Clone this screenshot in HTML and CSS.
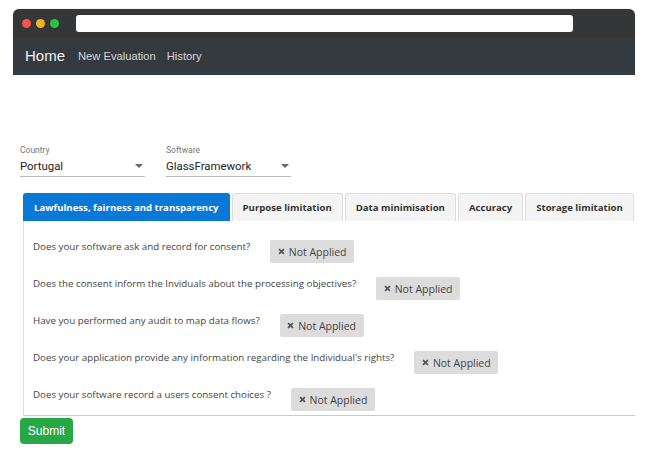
FILE: index.html
```html
<!DOCTYPE html>
<html>
<head>
<meta charset="utf-8">
<link rel="stylesheet" href="styles.css">
</head>
<body>
<div class="frame">
  <div class="titlebar">
    <span class="dot red"></span><span class="dot yellow"></span><span class="dot green"></span>
    <div class="url"></div>
  </div>
  <nav class="nav">
    <span class="brand">Home</span>
    <span class="link">New Evaluation</span>
    <span class="link">History</span>
  </nav>
</div>

<main class="main">
  <div class="selects">
    <div class="field">
      <div class="label">Country</div>
      <div class="select"><span>Portugal</span><span class="caret"></span></div>
    </div>
    <div class="field">
      <div class="label">Software</div>
      <div class="select"><span>GlassFramework</span><span class="caret"></span></div>
    </div>
  </div>

  <div class="tabs-wrap">
    <div class="tabs">
      <div class="tab active">Lawfulness, fairness and transparency</div>
      <div class="tab">Purpose limitation</div>
      <div class="tab">Data minimisation</div>
      <div class="tab">Accuracy</div>
      <div class="tab">Storage limitation</div>
      <div class="tab more"></div>
    </div>
    <div class="panel">
      <div class="q"><span class="qt">Does your software ask and record for consent?</span><button class="na"><svg viewBox="0 0 8 8" width="7" height="7"><path d="M1.2 1.2 6.8 6.8 M6.8 1.2 1.2 6.8" stroke="#555" stroke-width="2"/></svg>Not Applied</button></div>
      <div class="q"><span class="qt">Does the consent inform the Inviduals about the processing objectives?</span><button class="na"><svg viewBox="0 0 8 8" width="7" height="7"><path d="M1.2 1.2 6.8 6.8 M6.8 1.2 1.2 6.8" stroke="#555" stroke-width="2"/></svg>Not Applied</button></div>
      <div class="q"><span class="qt">Have you performed any audit to map data flows?</span><button class="na"><svg viewBox="0 0 8 8" width="7" height="7"><path d="M1.2 1.2 6.8 6.8 M6.8 1.2 1.2 6.8" stroke="#555" stroke-width="2"/></svg>Not Applied</button></div>
      <div class="q"><span class="qt">Does your application provide any information regarding the Individual's rights?</span><button class="na"><svg viewBox="0 0 8 8" width="7" height="7"><path d="M1.2 1.2 6.8 6.8 M6.8 1.2 1.2 6.8" stroke="#555" stroke-width="2"/></svg>Not Applied</button></div>
      <div class="q"><span class="qt">Does your software record a users consent choices ?</span><button class="na"><svg viewBox="0 0 8 8" width="7" height="7"><path d="M1.2 1.2 6.8 6.8 M6.8 1.2 1.2 6.8" stroke="#555" stroke-width="2"/></svg>Not Applied</button></div>
    </div>
  </div>
  <button class="submit">Submit</button>
</main>
</body>
</html>
```

FILE: styles.css
```css
* { box-sizing: border-box; }
body {
  margin: 0;
  background: #fff;
  font-family: "Open Sans", sans-serif;
  width: 667px;
  height: 455px;
  overflow: hidden;
}
.frame {
  margin: 9px 0 0 13px;
  width: 622px;
  border-radius: 6px 6px 0 0;
  overflow: hidden;
  box-shadow: 0 0 1px rgba(0,0,0,.4);
}
.titlebar {
  height: 29px;
  background: #353637;
  display: flex;
  align-items: center;
  padding-left: 9px;
}
.dot {
  width: 9px;
  height: 9px;
  border-radius: 50%;
  margin-right: 5px;
}
.red { background: #f5534c; }
.yellow { background: #f4b21c; }
.green { background: #29c53d; }
.url {
  margin-left: 12px;
  width: 497px;
  height: 17px;
  background: #fff;
  border-radius: 3px;
}
.nav {
  height: 37px;
  background: #343a40;
  display: flex;
  align-items: center;
  padding: 0 0 2px 12px;
  font-family: "Liberation Sans", Arial, sans-serif;
}
.brand {
  color: #f2f2f2;
  font-size: 15px;
  margin-right: 13px;
}
.link {
  color: rgba(255,255,255,.8);
  font-size: 11.2px;
  margin-right: 11px;
}
.main {
  padding: 70px 0 0 20px;
}
.selects {
  display: flex;
  gap: 21px;
  font-family: Roboto, sans-serif;
}
.field { width: 125px; }
.label {
  font-size: 8.5px;
  color: #777;
  line-height: 11px;
}
.select {
  display: flex;
  justify-content: space-between;
  align-items: center;
  height: 21px;
  font-size: 11.4px;
  color: #222;
  border-bottom: 1px solid #bbb;
  padding-right: 2px;
}
.caret {
  width: 0;
  height: 0;
  border-left: 4px solid transparent;
  border-right: 4px solid transparent;
  border-top: 4px solid #666;
}
.tabs-wrap {
  margin: 16px 0 0 3px;
  width: 612px;
}
.tabs {
  display: flex;
  gap: 2px;
  overflow: hidden;
  height: 28px;
}
.tab {
  flex: none;
  height: 28px;
  padding: 0 10px;
  display: flex;
  align-items: center;
  font-size: 9.6px;
  font-weight: 700;
  color: #333;
  background: #f4f4f4;
  border: 1px solid #ddd;
  border-bottom: none;
  border-radius: 3px 3px 0 0;
  white-space: nowrap;
}
.tab.more { width: 40px; }
.tab.active {
  background: #0a78d7;
  border-color: #0a78d7;
  color: #fff;
  padding: 0 10px;
}
.panel {
  border-left: 1px solid #ddd;
  border-bottom: 1px solid #ccc;
  padding: 19px 0 4px 9px;
}
.q {
  display: flex;
  align-items: flex-start;
  margin-bottom: 14px;
}
.q:last-child { margin-bottom: 0; }
.qt {
  font-size: 9.75px;
  color: #444;
  line-height: 14px;
}
.na {
  margin-left: 20px;
  width: 84px;
  height: 23px;
  border: none;
  border-radius: 2px;
  background: #dcdcdc;
  color: #444;
  font-family: "Open Sans", sans-serif;
  font-size: 10.5px;
  display: flex;
  align-items: center;
  justify-content: center;
  gap: 4px;
  padding: 0;
}
.submit {
  margin-top: 2px;
  width: 53px;
  height: 26px;
  border: none;
  border-radius: 4px;
  background: #28a745;
  color: #fff;
  font-family: "Liberation Sans", Arial, sans-serif;
  font-size: 12px;
  padding: 0;
}
```
